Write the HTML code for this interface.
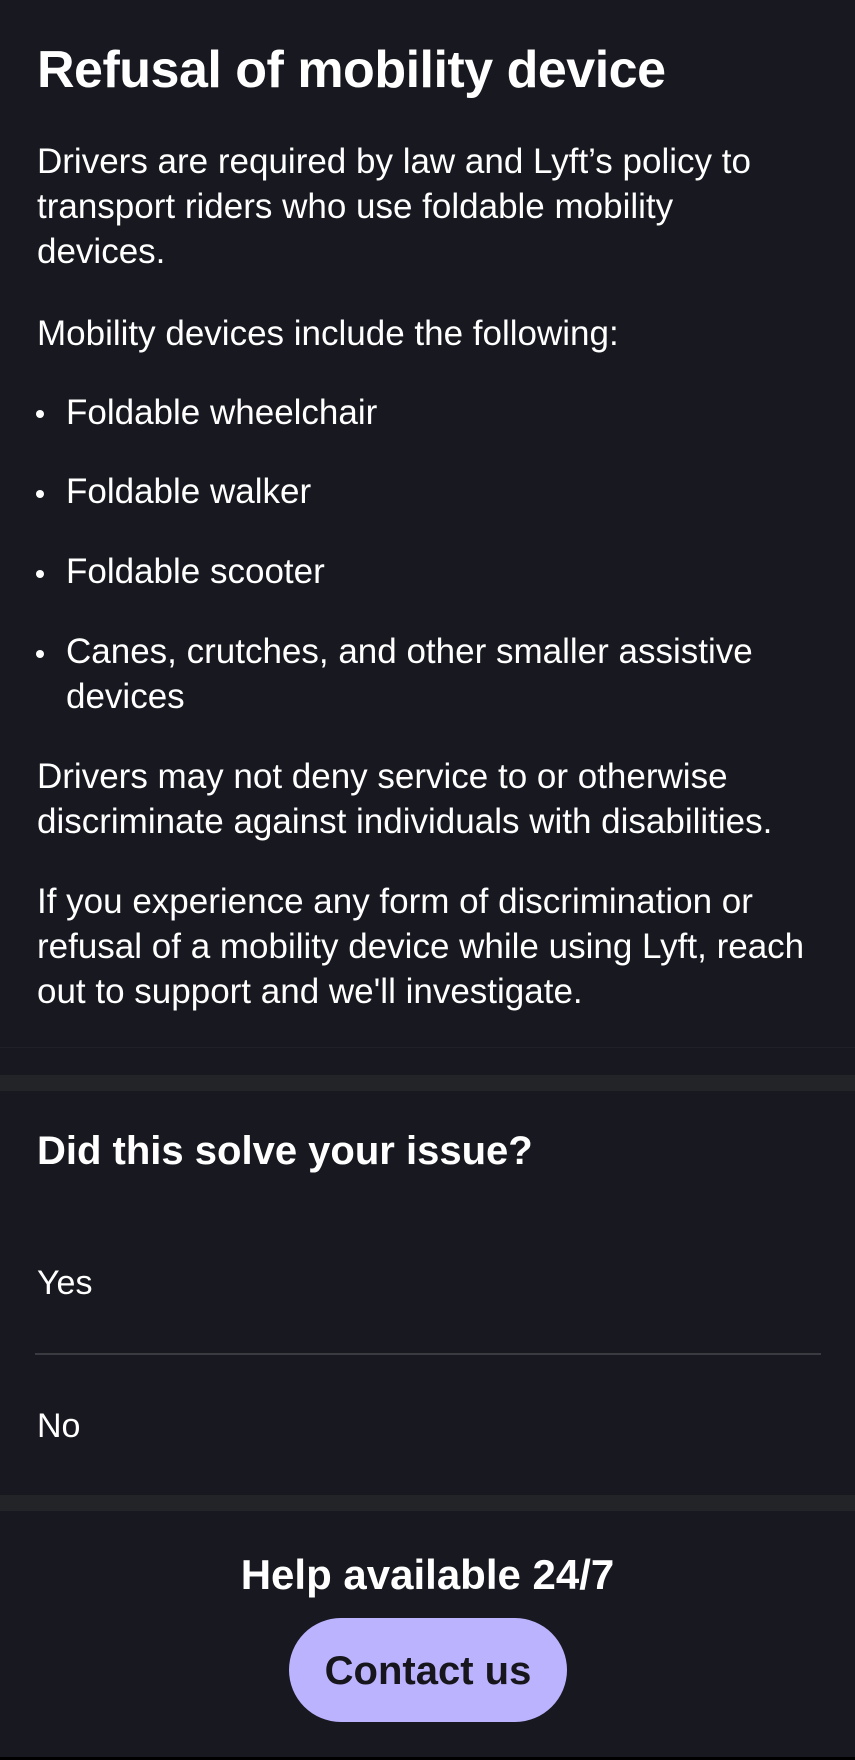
<!DOCTYPE html>
<html><head><meta charset="utf-8"><style>
html,body{margin:0;padding:0;background:#181920;}
body{width:855px;height:1760px;position:relative;overflow:hidden;font-family:"Liberation Sans",sans-serif;color:#fff;}
.t{position:absolute;left:37px;white-space:nowrap;}
.h1{font-weight:bold;font-size:52px;letter-spacing:-0.5px;}
.b{font-size:35px;line-height:45px;}
.dot{position:absolute;left:36px;width:8px;height:8px;border-radius:50%;background:#fff;}
</style></head><body>
<div class="t h1" style="top:40px;">Refusal of mobility device</div>
<div class="t b" style="top:139px;">Drivers are required by law and Lyft’s policy to<br>transport riders who use foldable mobility<br>devices.</div>
<div class="t b" style="top:311px;">Mobility devices include the following:</div>
<div class="dot" style="top:410px"></div><div class="t b" style="left:66px;top:390px;">Foldable wheelchair</div>
<div class="dot" style="top:490px"></div><div class="t b" style="left:66px;top:469px;">Foldable walker</div>
<div class="dot" style="top:570px"></div><div class="t b" style="left:66px;top:549px;">Foldable scooter</div>
<div class="dot" style="top:650px"></div><div class="t b" style="left:66px;top:629px;">Canes, crutches, and other smaller assistive<br>devices</div>
<div class="t b" style="top:754px;">Drivers may not deny service to or otherwise<br>discriminate against individuals with disabilities.</div>
<div class="t b" style="top:879px;">If you experience any form of discrimination or<br>refusal of a mobility device while using Lyft, reach<br>out to support and we'll investigate.</div>
<div style="position:absolute;left:0;right:0;top:1047px;height:1px;background:#202128"></div>
<div style="position:absolute;left:0;right:0;top:1075px;height:16px;background:#232428"></div>
<div class="t" style="top:1129px;font-weight:bold;font-size:40px;">Did this solve your issue?</div>
<div class="t" style="top:1264px;font-size:34px;">Yes</div>
<div style="position:absolute;left:35px;width:786px;top:1353px;height:2px;background:#3a3b40"></div>
<div class="t" style="top:1407px;font-size:34px;">No</div>
<div style="position:absolute;left:0;right:0;top:1495px;height:16px;background:#232428"></div>
<div style="position:absolute;left:0;right:0;top:1551px;text-align:center;font-weight:bold;font-size:42px;">Help available 24/7</div>
<div style="position:absolute;left:289px;top:1618px;width:278px;height:104px;border-radius:52px;background:#bcb3ff;color:#16161c;font-weight:bold;font-size:40px;line-height:106px;text-align:center;">Contact us</div>
<div style="position:absolute;left:0;right:0;top:1757px;height:3px;background:#000"></div>
</body></html>
